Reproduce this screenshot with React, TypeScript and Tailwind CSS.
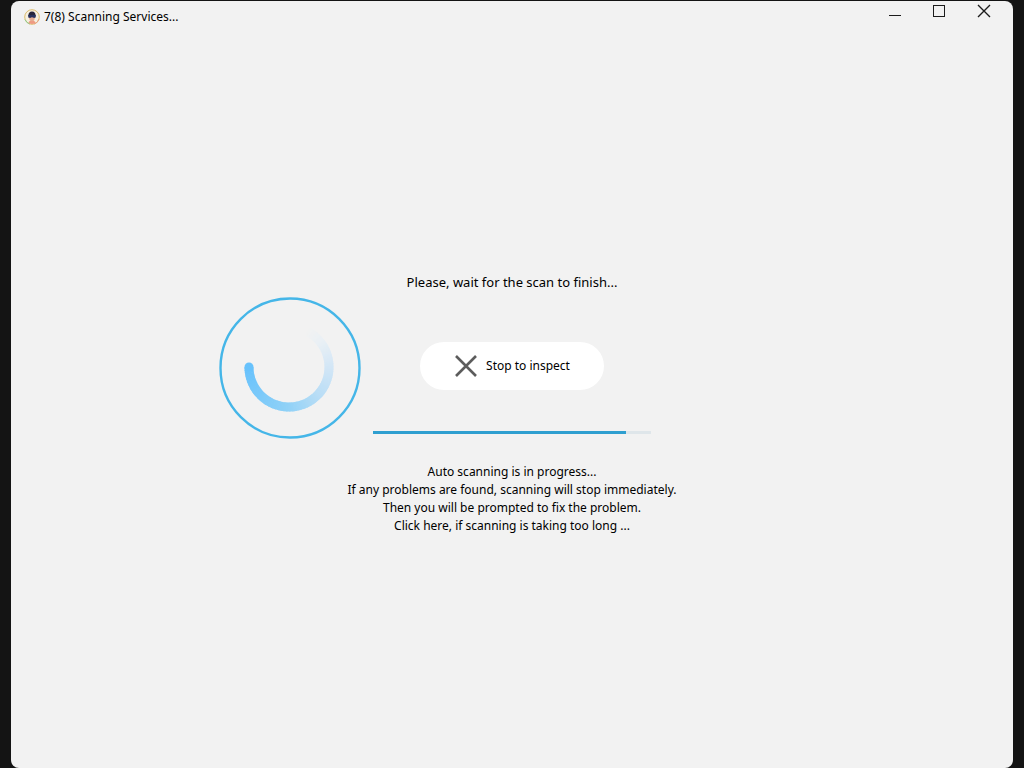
const statusLines = [
  "Auto scanning is in progress...",
  "If any problems are found, scanning will stop immediately.",
  "Then you will be prompted to fix the problem.",
];

// Tail of the spinner, from the bright head on the left round to the faded end.
const SWEEP = 242;
const STEP = 2;
const stops = [
  { at: 0, rgb: [104, 194, 252] },
  { at: 0.35, rgb: [143, 209, 247] },
  { at: 0.55, rgb: [184, 221, 246] },
  { at: 0.75, rgb: [213, 231, 246] },
  { at: 0.9, rgb: [234, 240, 245] },
  { at: 1, rgb: [242, 242, 242] },
];

function colorAt(t: number) {
  const i = Math.max(1, stops.findIndex((s) => s.at >= t));
  const a = stops[i - 1];
  const b = stops[i];
  const k = (t - a.at) / (b.at - a.at);
  return `rgb(${a.rgb.map((v, n) => Math.round(v + (b.rgb[n] - v) * k)).join(",")})`;
}

function arcPath(from: number, to: number) {
  const point = (deg: number) => {
    const r = (deg * Math.PI) / 180;
    return `${(70 + 40 * Math.cos(r)).toFixed(2)} ${(70 + 40 * Math.sin(r)).toFixed(2)}`;
  };
  return `M${point(from)} A40 40 0 0 0 ${point(to)}`;
}

const segments = Array.from({ length: SWEEP / STEP }, (_, i) => i * STEP).reverse();

function Spinner() {
  return (
    <svg
      viewBox="0 0 142 142"
      className="size-[142px] shrink-0"
      fill="none"
      role="img"
      aria-label="Scanning"
    >
      <circle cx="71" cy="71" r="69.5" stroke="#45b6e8" strokeWidth="2.4" />
      {segments.map((deg) => (
        <path
          key={deg}
          d={arcPath(180 - deg, 180 - deg - STEP - 1)}
          stroke={colorAt(deg / SWEEP)}
          strokeWidth="9"
        />
      ))}
      <circle cx="30" cy="70" r="4.5" fill="#68c2fc" />
    </svg>
  );
}

function AppIcon() {
  return (
    <svg viewBox="0 0 16 16" className="size-4" aria-hidden="true">
      <circle cx="8" cy="8" r="7.3" fill="#f6efe0" stroke="#dcbc6c" />
      <path d="M1 10.5A7.3 7.3 0 0 0 6 15" fill="none" stroke="#8ecb8b" />
      <path d="M10 15a7.3 7.3 0 0 0 5-5" fill="none" stroke="#e9a37f" />
      <path d="M4.6 14c.3-2 1.6-2.8 3.4-2.8s3.1.8 3.4 2.8A7.2 7.2 0 0 1 8 15a7.2 7.2 0 0 1-3.4-1z" fill="#ef9b83" />
      <ellipse cx="8" cy="8.6" rx="2.9" ry="3.6" fill="#e5ac91" />
      <path d="M4.4 7C4.2 4 5.6 2.4 8 2.4S11.8 4 11.6 7L8 6.2z" fill="#27253c" />
      <path d="M4.2 6h7.6v1.8c0 1.5-3 1.5-3.8.3-.8 1.2-3.8 1.2-3.8-.3z" fill="#27315d" />
    </svg>
  );
}

function WindowControls() {
  return (
    <div className="flex pr-[7px]">
      <button type="button" aria-label="Minimize" className="flex h-5 w-11 items-center justify-center">
        <svg viewBox="0 0 14 14" className="size-[14px]" stroke="#1c1c1c">
          <path d="M0 11.5h12" />
        </svg>
      </button>
      <button type="button" aria-label="Maximize" className="flex h-5 w-11 items-center justify-center">
        <svg viewBox="0 0 14 14" className="size-[14px]" fill="none" stroke="#1c1c1c">
          <rect x="0.5" y="1.5" width="11" height="11" />
        </svg>
      </button>
      <button type="button" aria-label="Close" className="flex h-5 w-11 items-center justify-center">
        <svg viewBox="0 0 14 14" className="size-[14px]" stroke="#1c1c1c" strokeWidth="1.4">
          <path d="M1 1l12 12M13 1L1 13" />
        </svg>
      </button>
    </div>
  );
}

export default function App() {
  return (
    <div className="flex h-screen flex-col bg-[#141414] px-[11px] pt-px font-['Noto_Sans',sans-serif] text-black">
      <div className="flex flex-1 flex-col rounded-lg bg-[#f2f2f2]">
        <header className="flex items-start justify-between">
          <div className="flex h-8 items-center gap-1 pl-[13px]">
            <AppIcon />
            <h1 className="text-[12px] leading-4">7(8) Scanning Services...</h1>
          </div>
          <WindowControls />
        </header>

        <main className="flex flex-1 flex-col items-center justify-center pt-1.5">
          <div className="grid w-full grid-cols-[1fr_278px_1fr] items-end gap-3">
            <div className="flex justify-end">
              <Spinner />
            </div>
            <div className="flex flex-col items-center pb-[5px]">
              <p className="text-[13px] leading-5 whitespace-nowrap">
                Please, wait for the scan to finish...
              </p>
              <button
                type="button"
                className="mt-[50px] flex h-12 w-[184px] items-center justify-center gap-2 rounded-full bg-white text-[12px]"
              >
                <svg viewBox="0 0 24 24" className="size-6" stroke="#5c5c5c" strokeWidth="2.6" aria-hidden="true">
                  <path d="M2 2l20 20M22 2L2 22" />
                </svg>
                Stop to inspect
              </button>
              <div
                role="progressbar"
                aria-label="Scan progress"
                aria-valuenow={91}
                aria-valuemin={0}
                aria-valuemax={100}
                className="mt-[41px] h-[3px] w-full bg-[#dfe6ea]"
              >
                <div className="h-full bg-[#2f9fd0]" style={{ width: "91%" }} />
              </div>
            </div>
          </div>

          <div className="mt-6 text-center text-[12px] leading-[18px]">
            {statusLines.map((line) => (
              <p key={line}>{line}</p>
            ))}
            <a href="#inspect">Click here, if scanning is taking too long ...</a>
          </div>
        </main>
      </div>
    </div>
  );
}
